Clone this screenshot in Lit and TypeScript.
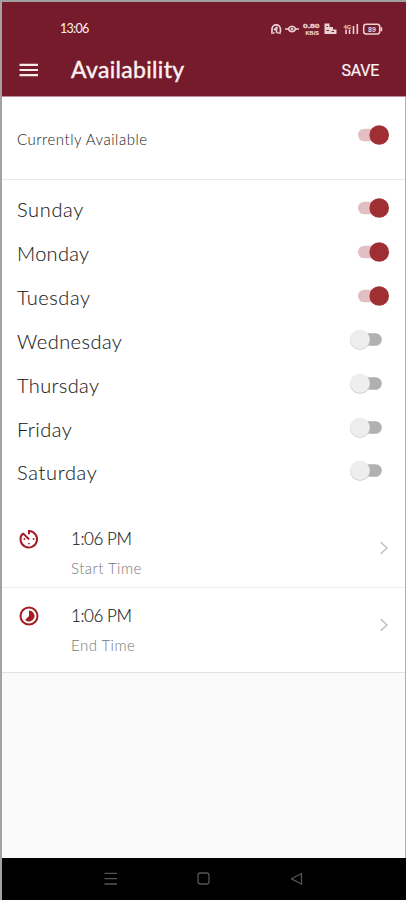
import { LitElement, html, css, svg } from "lit";
import { customElement, property } from "lit/decorators.js";
import { classMap } from "lit/directives/class-map.js";

@customElement("toggle-switch")
class ToggleSwitch extends LitElement {
  @property({ type: Boolean }) on = false;
  static styles = css`
    :host { display: block; width: 40px; height: 22px; }
    svg { display: block; }
  `;
  render() {
    return html`<svg width="40" height="22" viewBox="0 0 40 22">
      ${this.on
        ? svg`<rect x="8" y="4.700" width="24" height="12.600" rx="6.300" fill="#e3bfc4"/>
            <circle cx="29.200" cy="11" r="9.800" fill="#a02f33"/>`
        : svg`<rect x="8" y="4.200" width="23.800" height="12.600" rx="6.300" fill="#b0b0b0"/>
            <circle cx="10" cy="11" r="10" fill="#d4d4d4"/>
            <circle cx="10" cy="10.300" r="9.600" fill="#eeeeee"/>`}
    </svg>`;
  }
}

@customElement("time-row")
class TimeRow extends LitElement {
  @property() kind = "start";
  @property() time = "";
  @property() label = "";
  static styles = css`
    :host { display: flex; align-items: flex-start; font-family: Lato, sans-serif; }
    .icon { width: 22px; height: 22px; margin: 16.500px 0 0 16px; flex: none; }
    .text { margin: 16px 0 0 31px; flex: 1; }
    .time { font-size: 17px; line-height: 24px; font-weight: 300; color: #222; letter-spacing: -0.45px; -webkit-text-stroke: 0.15px; }
    .label { font-size: 15px; line-height: 20px; margin-top: 7px; font-weight: 300; color: #777; letter-spacing: 0.47px; }
    .chev { margin: 29.500px 16px 0 0; }
  `;
  render() {
    return html`
      <svg class="icon" viewBox="0 0 24 24" fill="#a51d24">
        ${this.kind === "start"
          ? svg`<path d="M12 2.200v4.600M12 3.200A9 9 0 1 1 5.200 6M5.200 5.600l7 7" fill="none" stroke="#a51d24" stroke-width="2.200"/>
              <circle cx="17" cy="12" r="1"/><circle cx="12" cy="17" r="1"/><circle cx="7" cy="12" r="1"/>`
          : svg`<circle cx="12" cy="12" r="9.300" fill="none" stroke="#a51d24" stroke-width="2.200"/>
              <path d="M12 6a6 6 0 1 1-4.240 10.240L12 12z"/>`}
      </svg>
      <div class="text">
        <div class="time">${this.time}</div>
        <div class="label">${this.label}</div>
      </div>
      <svg class="chev" width="10" height="14" viewBox="0 0 10 14" fill="none" stroke="#bdbdbd" stroke-width="1.400">
        <path d="M1.800 1.200L8 7l-6.200 5.800"/>
      </svg>`;
  }
}

@customElement("app-root")
class AppRoot extends LitElement {
  private days: [string, boolean, string][] = [
    ["Sunday", true, "sun"],
    ["Monday", true, "mon"],
    ["Tuesday", true, "tue"],
    ["Wednesday", false, "wed"],
    ["Thursday", false, "thu"],
    ["Friday", false, "fri"],
    ["Saturday", false, "sat"],
  ];
  static styles = css`
    :host { display: block; font-family: Lato, sans-serif; }
    .phone {
      box-sizing: border-box; width: 406px; height: 900px; display: flex; flex-direction: column;
      background: #fafafa; border-left: 2px solid #a3a3a3; border-top: 2px solid #a1a09e; overflow: hidden;
    }
    .head { height: 95px; background: #751b2b; color: #fbf3f2; flex: none; border-bottom: 1px solid #b99097; box-sizing: border-box; }
    .status { display: flex; height: 43px; padding: 11px 21px 0 58px; box-sizing: border-box; justify-content: space-between; }
    .clock { font-size: 12.500px; line-height: 32px; letter-spacing: -0.7px; }
    .bar { display: flex; align-items: center; height: 50px; padding-left: 16px; }
    .title { font-size: 23px; line-height: 28px; font-weight: 400; -webkit-text-stroke: 0.4px; margin: -2px 0 0 32px; flex: 1; letter-spacing: 0.33px; }
    .save { font: 400 16px Roboto, sans-serif; -webkit-text-stroke: 0.2px; letter-spacing: -0.25px; margin-right: 27px; }
    .body { border-right: 1px solid #b0b0b0; flex: 1; display: flex; flex-direction: column; }
    .current { height: 83px; box-sizing: border-box; background: #fff; display: flex; align-items: flex-start; border-bottom: 1px solid #e8e8e8; padding: 26px 15px 0 15px; }
    .current span { flex: 1; font-size: 15px; line-height: 32px; font-weight: 300; color: #222; letter-spacing: 0.52px; }
    .current toggle-switch { margin-top: 0.500px; }
    .days { background: #fff; height: 331px; padding-top: 8px; box-sizing: border-box; flex: none; }
    .day { display: flex; align-items: center; height: 43.850px; padding: 0 15px 0 15px; }
    .name { flex: 1; font-size: 20px; line-height: 24px; margin-top: -1.200px; font-weight: 300; color: #1c1c1c; letter-spacing: 0.45px; -webkit-text-stroke: 0.1px; }
    .sun { letter-spacing: 0.65px; }
    .mon { letter-spacing: 0.3px; }
    .tue { letter-spacing: 0.55px; }
    .thu { letter-spacing: 0.36px; }
    .sat { letter-spacing: 0.68px; }
    .day toggle-switch { margin-top: -3px; }
    .times { background: #fff; border-bottom: 1px solid #e3e3e3; }
    .t1 { height: 77px; border-bottom: 1px solid #ececec; box-sizing: border-box; }
    .t2 { height: 84px; }
    .nav { height: 42px; background: #000; flex: none; display: block; }
  `;
  render() {
    return html`<div class="phone">
      <div class="head">
        <div class="status">
          <div class="clock">13:06</div>
          <svg width="115" height="32" viewBox="0 0 115 32" fill="#ecd2d5" stroke="#ecd2d5">
            <path d="M2 19v-3a4.200 4.200 0 0 1 8.400 0v3M1 20h3.500M7.500 20h3.500M4 17l3.500-3M6.500 15v5" fill="none" stroke-width="1.700"/>
            <path d="M15 16h3M26 16h3M18 16q4-5.500 8 0q-4 5.500-8 0z" fill="none" stroke-width="1.700"/>
            <circle cx="22" cy="16" r="1" />
            <text x="33" y="14.800" font-family="Liberation Sans" font-size="6" font-weight="700" textLength="16.500" lengthAdjust="spacingAndGlyphs" stroke-width="0.300">0.80</text>
            <text x="35.500" y="21.500" font-family="Liberation Sans" font-size="5.500" font-weight="700" textLength="13.500" stroke-width="0.200">KB/S</text>
            <path d="M54.500 21V10.500h5v3.500h3.500v2.500h3.500v4.500z" stroke="none"/>
            <path d="M56.500 13.500h1.500M56.500 17.500h2.500M61.500 18.500h2.500" stroke="#751b2b" stroke-width="1"/>
            <text x="73.500" y="15.500" font-family="Liberation Sans" font-size="6" font-weight="700" stroke="none">4G</text>
            <path d="M76 21v-4.500M79.500 21v-4.500M83.500 21v-8M87.300 21V11" stroke-width="1.600"/>
            <rect x="93.700" y="11.300" width="16" height="9.700" rx="2.500" fill="none" stroke-width="1.500"/>
            <path d="M111.300 14.200v4" stroke-width="1.800"/>
            <text x="98" y="18.800" font-family="Liberation Sans" font-size="7" font-weight="700" stroke="none">89</text>
          </svg>
        </div>
        <div class="bar">
          <svg width="21" height="16" viewBox="0 0 21 16" stroke="#f8eaea" stroke-width="2.200"><path d="M1.500 2.800h18.500M1.500 8h18.500M1.500 13.200h18.500"/></svg>
          <div class="title">Availability</div>
          <div class="save">SAVE</div>
        </div>
      </div>
      <div class="body">
        <div class="current"><span>Currently Available</span><toggle-switch on></toggle-switch></div>
        <div class="days">
          ${this.days.map(
            ([name, on, id]) => html`<div class="day">
              <div class=${classMap({ name: true, [id]: true })}>${name}</div>
              <toggle-switch ?on=${on}></toggle-switch>
            </div>`
          )}
        </div>
        <div class="times">
          <time-row class="t1" kind="start" time="1:06 PM" label="Start Time"></time-row>
          <time-row class="t2" kind="end" time="1:06 PM" label="End Time"></time-row>
        </div>
      </div>
      <svg class="nav" width="404" height="42" viewBox="0 0 404 42" fill="none" stroke="#555" stroke-width="1.300">
        <path d="M102.500 15.300h12.500M102.500 20.700h12.500M102.500 26h12.500"/>
        <rect x="196" y="15" width="11" height="11" rx="2.500"/>
        <path d="M299.500 15.500v10.500l-10-5.200z" stroke-linejoin="round"/>
      </svg>
    </div>`;
  }
}
